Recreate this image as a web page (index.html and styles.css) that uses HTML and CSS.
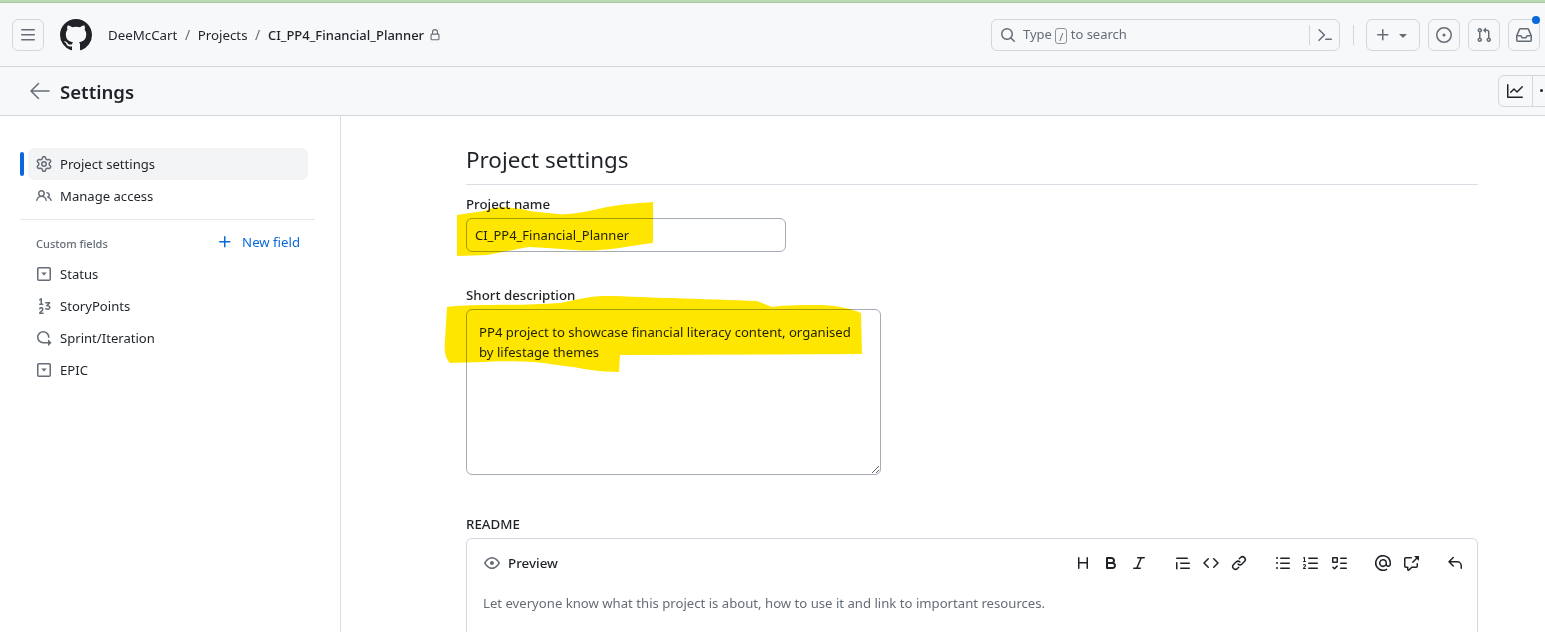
FILE: index.html
```html
<!DOCTYPE html>
<html lang="en">
<head>
<meta charset="utf-8">
<title>Settings</title>
<link rel="stylesheet" href="styles.css">
</head>
<body>
<svg class="defs" width="0" height="0">
<defs>
<symbol id="i-bars" viewBox="0 0 16 16"><path d="M1 2.75A.75.75 0 0 1 1.75 2h12.5a.75.75 0 0 1 0 1.5H1.75A.75.75 0 0 1 1 2.75Zm0 5A.75.75 0 0 1 1.75 7h12.5a.75.75 0 0 1 0 1.5H1.75A.75.75 0 0 1 1 7.75ZM1.75 12h12.5a.75.75 0 0 1 0 1.5H1.75a.75.75 0 0 1 0-1.5Z"/></symbol>
<symbol id="i-github" viewBox="0 0 16 16"><path d="M8 0c4.42 0 8 3.58 8 8a8.013 8.013 0 0 1-5.45 7.59c-.4.08-.55-.17-.55-.38 0-.27.01-1.13.01-2.2 0-.75-.25-1.23-.54-1.48 1.78-.2 3.65-.88 3.65-3.95 0-.88-.31-1.59-.82-2.15.08-.2.36-1.02-.08-2.12 0 0-.67-.22-2.2.82-.64-.18-1.32-.27-2-.27-.68 0-1.36.09-2 .27-1.53-1.03-2.2-.82-2.2-.82-.44 1.1-.16 1.92-.08 2.12-.51.56-.82 1.28-.82 2.15 0 3.06 1.86 3.75 3.64 3.95-.23.2-.44.55-.51 1.07-.46.21-1.61.55-2.33-.66-.15-.24-.6-.83-1.23-.82-.67.01-.27.38.01.53.34.19.73.9.82 1.13.16.45.68 1.31 2.69.94 0 .67.01 1.3.01 1.49 0 .21-.15.45-.55.38A7.995 7.995 0 0 1 0 8c0-4.42 3.58-8 8-8Z"/></symbol>
<symbol id="i-lock" viewBox="0 0 16 16"><path d="M4 4a4 4 0 0 1 8 0v2h.25c.966 0 1.75.784 1.75 1.75v5.5A1.75 1.75 0 0 1 12.25 15h-8.5A1.75 1.75 0 0 1 2 13.25v-5.5C2 6.784 2.784 6 3.75 6H4Zm8.25 3.5h-8.5a.25.25 0 0 0-.25.25v5.5c0 .138.112.25.25.25h8.5a.25.25 0 0 0 .25-.25v-5.5a.25.25 0 0 0-.25-.25ZM10.5 6V4a2.5 2.5 0 1 0-5 0v2Z"/></symbol>
<symbol id="i-search" viewBox="0 0 16 16"><path d="M10.68 11.74a6 6 0 0 1-7.922-8.982 6 6 0 0 1 8.982 7.922l3.04 3.04a.749.749 0 0 1-.326 1.275.749.749 0 0 1-.734-.215ZM11.5 7a4.499 4.499 0 1 0-8.997 0A4.499 4.499 0 0 0 11.5 7Z"/></symbol>
<symbol id="i-cmd" viewBox="0 0 16 16"><path d="M6.354 8.04l-4.773 4.773a.75.75 0 1 0 1.061 1.06L7.945 8.57a.75.75 0 0 0 0-1.06L2.642 2.206a.75.75 0 0 0-1.06 1.061L6.353 8.04ZM8.75 11.5a.75.75 0 0 0 0 1.5h5.5a.75.75 0 0 0 0-1.5h-5.5Z"/></symbol>
<symbol id="i-plus" viewBox="0 0 16 16"><path d="M7.75 2a.75.75 0 0 1 .75.75V7h4.25a.75.75 0 0 1 0 1.5H8.5v4.25a.75.75 0 0 1-1.5 0V8.5H2.75a.75.75 0 0 1 0-1.5H7V2.75A.75.75 0 0 1 7.75 2Z"/></symbol>
<symbol id="i-caret" viewBox="0 0 16 16"><path d="m4.427 7.427 3.396 3.396a.25.25 0 0 0 .354 0l3.396-3.396A.25.25 0 0 0 11.396 7H4.604a.25.25 0 0 0-.177.427Z"/></symbol>
<symbol id="i-issue" viewBox="0 0 16 16"><path d="M8 9.5a1.5 1.5 0 1 0 0-3 1.5 1.5 0 0 0 0 3Z"/><path d="M8 0a8 8 0 1 1 0 16A8 8 0 0 1 8 0ZM1.5 8a6.5 6.5 0 1 0 13 0 6.5 6.5 0 0 0-13 0Z"/></symbol>
<symbol id="i-pr" viewBox="0 0 16 16"><path d="M1.5 3.25a2.25 2.25 0 1 1 3 2.122v5.256a2.251 2.251 0 1 1-1.5 0V5.372A2.25 2.25 0 0 1 1.5 3.25Zm5.677-.177L9.573.677A.25.25 0 0 1 10 .854V2.5h1A2.5 2.5 0 0 1 13.5 5v5.628a2.251 2.251 0 1 1-1.5 0V5a1 1 0 0 0-1-1h-1v1.646a.25.25 0 0 1-.427.177L7.177 3.427a.25.25 0 0 1 0-.354ZM3.75 2.5a.75.75 0 1 0 0 1.5.75.75 0 0 0 0-1.5Zm0 9.5a.75.75 0 1 0 0 1.5.75.75 0 0 0 0-1.5Zm8.25.75a.75.75 0 1 0 1.5 0 .75.75 0 0 0-1.5 0Z"/></symbol>
<symbol id="i-inbox" viewBox="0 0 16 16"><path d="M2.8 2.06A1.75 1.75 0 0 1 4.41 1h7.18c.7 0 1.333.417 1.61 1.06l2.74 6.395c.04.093.06.194.06.295v4.5A1.75 1.75 0 0 1 14.25 15H1.75A1.75 1.75 0 0 1 0 13.25v-4.5c0-.101.02-.202.06-.295Zm1.61.44a.25.25 0 0 0-.23.152L1.887 8H4.75a.75.75 0 0 1 .6.3L6.625 10h2.75l1.275-1.7a.75.75 0 0 1 .6-.3h2.863L11.82 2.652a.25.25 0 0 0-.23-.152Zm10.09 7h-2.875l-1.275 1.7a.75.75 0 0 1-.6.3h-3.5a.75.75 0 0 1-.6-.3L4.375 9.5H1.5v3.75c0 .138.112.25.25.25h12.5a.25.25 0 0 0 .25-.25Z"/></symbol>
<symbol id="i-back" viewBox="0 0 24 24"><path d="M11.03 3.97a.75.75 0 0 1 0 1.06l-6.22 6.22H21a.75.75 0 0 1 0 1.5H4.81l6.22 6.22a.75.75 0 1 1-1.06 1.06l-7.5-7.5a.75.75 0 0 1 0-1.06l7.5-7.5a.75.75 0 0 1 1.06 0Z"/></symbol>
<symbol id="i-graph" viewBox="0 0 16 16"><path d="M1.5 1.75V13.5h13.75a.75.75 0 0 1 0 1.5H.75a.75.75 0 0 1-.75-.75V1.75a.75.75 0 0 1 1.5 0Zm14.28 2.53-5.25 5.25a.75.75 0 0 1-1.06 0L7 7.06 4.28 9.78a.751.751 0 0 1-1.042-.018.751.751 0 0 1-.018-1.042l3.25-3.25a.75.75 0 0 1 1.06 0L10 7.94l4.72-4.72a.751.751 0 0 1 1.042.018.751.751 0 0 1 .018 1.042Z"/></symbol>
<symbol id="i-kebab" viewBox="0 0 16 16"><path d="M8 9a1.5 1.5 0 1 0 0-3 1.5 1.5 0 0 0 0 3ZM1.5 9a1.5 1.5 0 1 0 0-3 1.5 1.5 0 0 0 0 3Zm13 0a1.5 1.5 0 1 0 0-3 1.5 1.5 0 0 0 0 3Z"/></symbol>
<symbol id="i-gear" viewBox="0 0 16 16"><path d="M8 0a8.2 8.2 0 0 1 .701.031C9.444.095 9.99.645 10.16 1.29l.288 1.107c.018.066.079.158.212.224.231.114.454.243.668.386.123.082.233.09.299.071l1.103-.303c.644-.176 1.392.021 1.82.63.27.385.506.792.704 1.218.315.675.111 1.422-.364 1.891l-.814.806c-.049.048-.098.147-.088.294.016.257.016.515 0 .772-.01.147.038.246.088.294l.814.806c.475.469.679 1.216.364 1.891a7.977 7.977 0 0 1-.704 1.217c-.428.61-1.176.807-1.82.63l-1.102-.302c-.067-.019-.177-.011-.3.071a5.909 5.909 0 0 1-.668.386c-.133.066-.194.158-.211.224l-.29 1.106c-.168.646-.715 1.196-1.458 1.26a8.006 8.006 0 0 1-1.402 0c-.743-.064-1.289-.614-1.458-1.26l-.289-1.106c-.018-.066-.079-.158-.212-.224a5.738 5.738 0 0 1-.668-.386c-.123-.082-.233-.09-.299-.071l-1.103.303c-.644.176-1.392-.021-1.82-.63a8.12 8.12 0 0 1-.704-1.218c-.315-.675-.111-1.422.363-1.891l.815-.806c.05-.048.098-.147.088-.294a6.214 6.214 0 0 1 0-.772c.01-.147-.038-.246-.088-.294l-.815-.806C.635 6.045.431 5.298.746 4.623a7.92 7.92 0 0 1 .704-1.217c.428-.61 1.176-.807 1.82-.63l1.102.302c.067.019.177.011.3-.071.214-.143.437-.272.668-.386.133-.066.194-.158.211-.224l.29-1.106C6.009.645 6.556.095 7.299.03 7.53.01 7.764 0 8 0Zm-.571 1.525c-.036.003-.108.036-.137.146l-.289 1.105c-.147.561-.549.967-.998 1.189-.173.086-.34.183-.5.29-.417.278-.97.423-1.529.27l-1.103-.303c-.109-.03-.175.016-.195.045-.22.312-.412.644-.573.99-.014.031-.021.11.059.19l.815.806c.411.406.562.957.53 1.456a4.709 4.709 0 0 0 0 .582c.032.499-.119 1.05-.53 1.456l-.815.806c-.081.08-.073.159-.059.19.162.346.353.677.573.989.02.03.085.076.195.046l1.102-.303c.56-.153 1.113-.008 1.53.27.161.107.328.204.501.29.447.222.85.629.997 1.189l.289 1.105c.029.109.101.143.137.146a6.6 6.6 0 0 0 1.142 0c.036-.003.108-.036.137-.146l.289-1.105c.147-.561.549-.967.998-1.189.173-.086.34-.183.5-.29.417-.278.97-.423 1.529-.27l1.103.303c.109.029.175-.016.195-.045.22-.313.411-.644.573-.99.014-.031.021-.11-.059-.19l-.815-.806c-.411-.406-.562-.957-.53-1.456a4.709 4.709 0 0 0 0-.582c-.032-.499.119-1.05.53-1.456l.815-.806c.081-.08.073-.159.059-.19a6.464 6.464 0 0 0-.573-.989c-.02-.03-.085-.076-.195-.046l-1.102.303c-.56.153-1.113.008-1.53-.27a4.44 4.44 0 0 0-.501-.29c-.447-.222-.85-.629-.997-1.189l-.289-1.105c-.029-.11-.101-.143-.137-.146a6.6 6.6 0 0 0-1.142 0ZM11 8a3 3 0 1 1-6 0 3 3 0 0 1 6 0ZM9.5 8a1.5 1.5 0 1 0-3.001.001A1.5 1.5 0 0 0 9.5 8Z"/></symbol>
<symbol id="i-people" viewBox="0 0 16 16"><path d="M2 5.5a3.5 3.5 0 1 1 5.898 2.549 5.508 5.508 0 0 1 3.034 4.084.75.75 0 1 1-1.482.235 4 4 0 0 0-7.9 0 .75.75 0 0 1-1.482-.236A5.507 5.507 0 0 1 3.102 8.05 3.493 3.493 0 0 1 2 5.5ZM11 4a3.001 3.001 0 0 1 2.22 5.018 5.01 5.01 0 0 1 2.56 3.012.749.749 0 0 1-.885.954.752.752 0 0 1-.549-.514 3.507 3.507 0 0 0-2.522-2.372.75.75 0 0 1-.574-.73v-.352a.75.75 0 0 1 .416-.672A1.5 1.5 0 0 0 11 5.5.75.75 0 0 1 11 4Zm-5.5-.5a2 2 0 1 0-.001 3.999A2 2 0 0 0 5.5 3.5Z"/></symbol>
<symbol id="i-select" viewBox="0 0 16 16"><path d="M1 2.75C1 1.784 1.784 1 2.75 1h10.5c.966 0 1.75.784 1.75 1.75v10.5A1.75 1.75 0 0 1 13.25 15H2.75A1.75 1.75 0 0 1 1 13.25Zm1.75-.25a.25.25 0 0 0-.25.25v10.5c0 .138.112.25.25.25h10.5a.25.25 0 0 0 .25-.25V2.75a.25.25 0 0 0-.25-.25Z"/><path d="M5.2 6.5h5.6L8 9.5Z"/></symbol>
<symbol id="i-number" viewBox="0 0 16 16"><path d="M9 4.75A.75.75 0 0 1 9.75 4h4a.75.75 0 0 1 .53 1.28l-1.89 1.892c.312.076.604.18.867.319.742.391 1.244 1.063 1.244 2.005 0 .653-.231 1.208-.629 1.627-.386.408-.894.653-1.408.777-1.01.243-2.225.063-3.124-.527a.751.751 0 0 1 .822-1.254c.534.35 1.32.474 1.951.322.306-.073.53-.201.67-.349.129-.136.218-.32.218-.596 0-.308-.123-.509-.444-.678-.373-.197-.98-.318-1.806-.318a.75.75 0 0 1-.53-1.28l1.72-1.72H9.75A.75.75 0 0 1 9 4.75Zm-3.587 5.763c-.35-.05-.77.113-.983.572a.75.75 0 1 1-1.36-.632c.508-1.094 1.589-1.565 2.558-1.425 1 .145 1.872.945 1.872 2.222 0 1.433-1.088 2.192-1.79 2.681-.308.216-.571.397-.772.573H7a.75.75 0 0 1 0 1.5H3.75a.75.75 0 0 1-.75-.75c0-.69.3-1.211.67-1.61.348-.372.8-.676 1.15-.92.8-.56 1.18-.904 1.18-1.474 0-.473-.267-.69-.587-.737ZM5.604.089A.75.75 0 0 1 6 .75v4.77h.711a.75.75 0 0 1 0 1.5H3.759a.75.75 0 0 1 0-1.5H4.5V2.15l-.334.223a.75.75 0 0 1-.832-1.248l1.5-1a.75.75 0 0 1 .77-.037Z"/></symbol>
<symbol id="i-iter" viewBox="0 0 16 16"><path d="M2.5 7.25a4.75 4.75 0 0 1 9.5 0 .75.75 0 0 0 1.5 0 6.25 6.25 0 1 0-6.25 6.25H12v2.146c0 .223.27.335.427.177l2.896-2.896a.25.25 0 0 0 0-.354l-2.896-2.896a.25.25 0 0 0-.427.177V12H7.25A4.75 4.75 0 0 1 2.5 7.25Z"/></symbol>
<symbol id="i-eye" viewBox="0 0 16 16"><path d="M8 2c1.981 0 3.671.992 4.933 2.078 1.27 1.091 2.187 2.345 2.637 3.023a1.62 1.62 0 0 1 0 1.798c-.45.678-1.367 1.932-2.637 3.023C11.67 13.008 9.981 14 8 14c-1.981 0-3.671-.992-4.933-2.078C1.797 10.83.88 9.576.43 8.898a1.62 1.62 0 0 1 0-1.798c.45-.677 1.367-1.931 2.637-3.022C4.33 2.992 6.019 2 8 2ZM1.679 7.932a.12.12 0 0 0 0 .136c.411.622 1.241 1.75 2.366 2.717C5.176 11.758 6.527 12.5 8 12.5c1.473 0 2.825-.742 3.955-1.715 1.124-.967 1.954-2.096 2.366-2.717a.12.12 0 0 0 0-.136c-.412-.621-1.242-1.75-2.366-2.717C10.824 4.242 9.473 3.5 8 3.5c-1.473 0-2.825.742-3.955 1.715-1.124.967-1.954 2.096-2.366 2.717ZM8 10a2 2 0 1 1-.001-3.999A2 2 0 0 1 8 10Z"/></symbol>
<symbol id="i-heading" viewBox="0 0 16 16"><path d="M3.75 2a.75.75 0 0 1 .75.75V7h7V2.75a.75.75 0 0 1 1.5 0v10.5a.75.75 0 0 1-1.5 0V8.5h-7v4.75a.75.75 0 0 1-1.5 0V2.75A.75.75 0 0 1 3.75 2Z"/></symbol>
<symbol id="i-bold" viewBox="0 0 16 16"><path d="M4 2h4.5a3.501 3.501 0 0 1 2.852 5.53A3.499 3.499 0 0 1 9.5 14H4a1 1 0 0 1-1-1V3a1 1 0 0 1 1-1Zm1 7v3h4.5a1.5 1.5 0 0 0 0-3Zm3.5-2a1.5 1.5 0 0 0 0-3H5v3Z"/></symbol>
<symbol id="i-italic" viewBox="0 0 16 16"><path d="M6 2.75A.75.75 0 0 1 6.75 2h6.5a.75.75 0 0 1 0 1.5h-2.505l-3.858 9H9.25a.75.75 0 0 1 0 1.5h-6.5a.75.75 0 0 1 0-1.5h2.505l3.858-9H6.75A.75.75 0 0 1 6 2.75Z"/></symbol>
<symbol id="i-quote" viewBox="0 0 16 16"><path d="M1.75 2.5h10.5a.75.75 0 0 1 0 1.5H1.75a.75.75 0 0 1 0-1.5Zm4 5h8.5a.75.75 0 0 1 0 1.5h-8.5a.75.75 0 0 1 0-1.5Zm0 5h8.5a.75.75 0 0 1 0 1.5h-8.5a.75.75 0 0 1 0-1.5ZM2.5 7.75v6a.75.75 0 0 1-1.5 0v-6a.75.75 0 0 1 1.5 0Z"/></symbol>
<symbol id="i-code" viewBox="0 0 16 16"><path d="m11.28 3.22 4.25 4.25a.75.75 0 0 1 0 1.06l-4.25 4.25a.749.749 0 0 1-1.275-.326.749.749 0 0 1 .215-.734L13.94 8l-3.72-3.72a.749.749 0 0 1 .326-1.275.749.749 0 0 1 .734.215Zm-6.56 0a.751.751 0 0 1 1.042.018.751.751 0 0 1 .018 1.042L2.06 8l3.72 3.72a.749.749 0 0 1-.326 1.275.749.749 0 0 1-.734-.215L.47 8.53a.75.75 0 0 1 0-1.06Z"/></symbol>
<symbol id="i-link" viewBox="0 0 16 16"><path d="m7.775 3.275 1.25-1.25a3.5 3.5 0 1 1 4.95 4.95l-2.5 2.5a3.5 3.5 0 0 1-4.95 0 .751.751 0 0 1 .018-1.042.751.751 0 0 1 1.042-.018 1.998 1.998 0 0 0 2.83 0l2.5-2.5a2.002 2.002 0 0 0-2.83-2.83l-1.25 1.25a.751.751 0 0 1-1.042-.018.751.751 0 0 1-.018-1.042Zm-4.69 9.64a1.998 1.998 0 0 0 2.83 0l1.25-1.25a.751.751 0 0 1 1.042.018.751.751 0 0 1 .018 1.042l-1.25 1.25a3.5 3.5 0 1 1-4.95-4.95l2.5-2.5a3.5 3.5 0 0 1 4.95 0 .751.751 0 0 1-.018 1.042.751.751 0 0 1-1.042.018 1.998 1.998 0 0 0-2.83 0l-2.5 2.5a1.998 1.998 0 0 0 0 2.83Z"/></symbol>
<symbol id="i-ul" viewBox="0 0 16 16"><path d="M5.75 2.5h8.5a.75.75 0 0 1 0 1.5h-8.5a.75.75 0 0 1 0-1.5Zm0 5h8.5a.75.75 0 0 1 0 1.5h-8.5a.75.75 0 0 1 0-1.5Zm0 5h8.5a.75.75 0 0 1 0 1.5h-8.5a.75.75 0 0 1 0-1.5ZM2 14a1 1 0 1 1 0-2 1 1 0 0 1 0 2Zm1-6a1 1 0 1 1-2 0 1 1 0 0 1 2 0ZM2 4a1 1 0 1 1 0-2 1 1 0 0 1 0 2Z"/></symbol>
<symbol id="i-ol" viewBox="0 0 16 16"><path d="M5 3.25a.75.75 0 0 1 .75-.75h8.5a.75.75 0 0 1 0 1.5h-8.5A.75.75 0 0 1 5 3.25Zm0 5a.75.75 0 0 1 .75-.75h8.5a.75.75 0 0 1 0 1.5h-8.5A.75.75 0 0 1 5 8.25Zm0 5a.75.75 0 0 1 .75-.75h8.5a.75.75 0 0 1 0 1.5h-8.5a.75.75 0 0 1-.75-.75ZM.924 10.32a.5.5 0 0 1-.851-.525l.001-.001.001-.002.002-.004.007-.011c.097-.144.215-.273.348-.384.228-.19.588-.392 1.068-.392.468 0 .858.181 1.126.484.259.294.377.673.377 1.038 0 .987-.686 1.495-1.156 1.845l-.047.035c-.303.225-.522.4-.654.597h1.357a.5.5 0 0 1 0 1H.5a.5.5 0 0 1-.5-.5c0-1.005.692-1.52 1.167-1.875l.035-.025c.531-.396.8-.625.8-1.078a.576.576 0 0 0-.128-.376C1.806 10.068 1.695 10 1.5 10a.658.658 0 0 0-.429.163.835.835 0 0 0-.144.153ZM2.003 2.5V6h.503a.5.5 0 0 1 0 1H.5a.5.5 0 0 1 0-1h.503V3.308l-.28.14a.5.5 0 0 1-.446-.895l1.003-.5a.5.5 0 0 1 .723.447Z"/></symbol>
<symbol id="i-task" viewBox="0 0 16 16"><path d="M2 2h4a1 1 0 0 1 1 1v4a1 1 0 0 1-1 1H2a1 1 0 0 1-1-1V3a1 1 0 0 1 1-1Zm4.655 8.595a.75.75 0 0 1 0 1.06L4.03 14.28a.75.75 0 0 1-1.06 0l-1.5-1.5a.749.749 0 0 1 .326-1.275.749.749 0 0 1 .734.215l.97.97 2.095-2.095a.75.75 0 0 1 1.06 0ZM9.75 2.5h5.5a.75.75 0 0 1 0 1.5h-5.5a.75.75 0 0 1 0-1.5Zm0 5h5.5a.75.75 0 0 1 0 1.5h-5.5a.75.75 0 0 1 0-1.5Zm0 5h5.5a.75.75 0 0 1 0 1.5h-5.5a.75.75 0 0 1 0-1.5Zm-7.25-9v3h3v-3Z"/></symbol>
<symbol id="i-mention" viewBox="0 0 16 16"><path d="M4.75 2.37a6.501 6.501 0 0 0 6.5 11.26.75.75 0 0 1 .75 1.298A7.999 7.999 0 0 1 .989 4.148 8 8 0 0 1 16 7.75v1.5a2.75 2.75 0 0 1-5.072 1.475 3.999 3.999 0 0 1-6.65-4.19A4 4 0 0 1 12 8v1.25a1.25 1.25 0 0 0 2.5 0V7.867a6.5 6.5 0 0 0-9.75-5.496ZM10.5 8a2.5 2.5 0 1 0-5 0 2.5 2.5 0 0 0 5 0Z"/></symbol>
<symbol id="i-xref" viewBox="0 0 16 16"><path d="M2.75 3.5a.25.25 0 0 0-.25.25v7.5c0 .138.112.25.25.25h2a.75.75 0 0 1 .75.75v2.19l2.72-2.72a.749.749 0 0 1 .53-.22h4.5a.25.25 0 0 0 .25-.25v-2.5a.75.75 0 0 1 1.5 0v2.5A1.75 1.75 0 0 1 13.25 13H9.06l-2.573 2.573A1.458 1.458 0 0 1 4 14.543V13H2.75A1.75 1.75 0 0 1 1 11.25v-7.5C1 2.784 1.784 2 2.75 2h5.5a.75.75 0 0 1 0 1.5ZM16 1.25v4.146a.25.25 0 0 1-.427.177L14.03 4.03l-3.75 3.75a.749.749 0 0 1-1.275-.326.749.749 0 0 1 .215-.734l3.75-3.75-1.543-1.543A.25.25 0 0 1 11.604 1h4.146a.25.25 0 0 1 .25.25Z"/></symbol>
<symbol id="i-reply" viewBox="0 0 16 16"><path d="M6.78 1.97a.75.75 0 0 1 0 1.06L3.81 6h6.44A4.75 4.75 0 0 1 15 10.75v2.5a.75.75 0 0 1-1.5 0v-2.5a3.25 3.25 0 0 0-3.25-3.25H3.81l2.97 2.97a.749.749 0 0 1-.326 1.275.749.749 0 0 1-.734-.215L1.47 7.28a.75.75 0 0 1 0-1.06l4.25-4.25a.75.75 0 0 1 1.06 0Z"/></symbol>
</defs>
</svg>

<div class="page">
  <div class="topline"></div>
  <header class="appbar">
    <button class="btn square"><svg class="ic muted"><use href="#i-bars"/></svg></button>
    <svg class="logo"><use href="#i-github"/></svg>
    <nav class="crumbs">
      <a class="crumb">DeeMcCart</a><span class="sep">/</span>
      <a class="crumb">Projects</a><span class="sep">/</span>
      <a class="crumb strong">CI_PP4_Financial_Planner</a>
      <svg class="ic-sm muted"><use href="#i-lock"/></svg>
    </nav>
    <div class="spacer"></div>
    <div class="search">
      <svg class="ic muted"><use href="#i-search"/></svg>
      <span class="search-text">Type <kbd class="slash">/</kbd> to search</span>
      <span class="grow"></span>
      <span class="search-div"></span>
      <svg class="ic muted"><use href="#i-cmd"/></svg>
    </div>
    <span class="bar-div"></span>
    <button class="btn plus"><svg class="ic muted"><use href="#i-plus"/></svg><svg class="ic muted"><use href="#i-caret"/></svg></button>
    <button class="btn square"><svg class="ic muted"><use href="#i-issue"/></svg></button>
    <button class="btn square"><svg class="ic muted"><use href="#i-pr"/></svg></button>
    <button class="btn square inbox"><svg class="ic muted"><use href="#i-inbox"/></svg><span class="dot"></span></button>
  </header>

  <div class="subbar">
    <svg class="ic-lg muted"><use href="#i-back"/></svg>
    <h1 class="subtitle">Settings</h1>
    <div class="spacer"></div>
    <div class="btn-group">
      <span class="group-btn"><svg class="ic dark"><use href="#i-graph"/></svg></span>
      <span class="group-btn more"><svg class="ic dark"><use href="#i-kebab"/></svg></span>
    </div>
  </div>

  <div class="layout">
    <aside class="side">
      <ul class="side-list">
        <li class="side-item active"><svg class="ic muted"><use href="#i-gear"/></svg>Project settings</li>
        <li class="side-item"><svg class="ic muted"><use href="#i-people"/></svg>Manage access</li>
      </ul>
      <hr class="side-rule">
      <div class="side-head"><span class="side-caption">Custom fields</span><span class="new-field"><svg class="ic blue"><use href="#i-plus"/></svg>New field</span></div>
      <ul class="side-list">
        <li class="side-item"><svg class="ic muted"><use href="#i-select"/></svg>Status</li>
        <li class="side-item"><svg class="ic muted"><use href="#i-number"/></svg>StoryPoints</li>
        <li class="side-item"><svg class="ic muted"><use href="#i-iter"/></svg>Sprint/Iteration</li>
        <li class="side-item"><svg class="ic muted"><use href="#i-select"/></svg>EPIC</li>
      </ul>
    </aside>

    <main class="main">
      <h2 class="heading">Project settings</h2>
      <label class="label first" for="pname">Project name</label>
      <input id="pname" class="field name" type="text" value="CI_PP4_Financial_Planner">
      <label class="label second" for="pdesc">Short description</label>
      <textarea id="pdesc" class="field desc">PP4 project to showcase financial literacy content, organised by lifestage themes</textarea>
      <div class="label third">README</div>
      <section class="readme">
        <div class="readme-bar">
          <svg class="ic muted eye"><use href="#i-eye"/></svg>
          <span class="preview">Preview</span>
          <span class="grow"></span>
          <div class="tools">
            <svg class="ic dark"><use href="#i-heading"/></svg>
            <svg class="ic dark"><use href="#i-bold"/></svg>
            <svg class="ic dark"><use href="#i-italic"/></svg>
          </div>
          <div class="tools">
            <svg class="ic dark"><use href="#i-quote"/></svg>
            <svg class="ic dark"><use href="#i-code"/></svg>
            <svg class="ic dark"><use href="#i-link"/></svg>
          </div>
          <div class="tools">
            <svg class="ic dark"><use href="#i-ul"/></svg>
            <svg class="ic dark"><use href="#i-ol"/></svg>
            <svg class="ic dark"><use href="#i-task"/></svg>
          </div>
          <div class="tools">
            <svg class="ic dark"><use href="#i-mention"/></svg>
            <svg class="ic dark"><use href="#i-xref"/></svg>
          </div>
          <div class="tools last">
            <svg class="ic dark"><use href="#i-reply"/></svg>
          </div>
        </div>
        <p class="placeholder">Let everyone know what this project is about, how to use it and link to important resources.</p>
      </section>
    </main>
  </div>

  <svg class="marker" viewBox="0 0 1545 632" width="1545" height="632">
    <path d="M457 215 C470 213 476 212 484 211 C498 205 510 208 522 209 C535 213 545 212 558 214 C570 215 585 212 607 207 C625 204 640 203 653 202 L653 243 C630 246 615 249 600 250 C580 252 560 248 530 247 C520 248 505 252 487 255 L457 256 Z"/>
    <path d="M447 307 C470 304 520 306 560 303 C575 300 590 296 603 296 C630 296 650 298 673 298 C700 299 735 300 757 301 L772 307 C785 305 805 305 823 305 C840 306 852 309 861 313 L862 354 L620 355 L619 372 C600 372 585 369 573 367 C555 365 545 363 535 362 C515 361 495 361 483 362 L450 363 C445 358 444 350 445 340 Z"/>
  </svg>
</div>
</body>
</html>
```
FILE: styles.css
```css
* { box-sizing: border-box; }
html, body { margin: 0; padding: 0; background: #fff; }
body {
  font-family: "Noto Sans", "Open Sans", sans-serif;
  font-size: 13px;
  color: #1f2328;
  overflow: hidden;
}
.defs { position: absolute; }
.page { position: relative; width: 1545px; height: 632px; overflow: hidden; }
.topline { height: 3px; background: #bcd7b4; border-bottom: 1px solid #a9c9a2; }
.ic { width: 16px; height: 16px; flex: none; fill: currentColor; display: block; }
.ic-sm { width: 12px; height: 12px; flex: none; fill: currentColor; display: block; }
.ic-lg { width: 24px; height: 24px; flex: none; fill: currentColor; display: block; }
.muted { color: #656d76; }
.dark { color: #1f2328; }
.blue { color: #0969da; }
.spacer, .grow { flex: 1; }

.appbar {
  height: 64px;
  background: #f6f8fa;
  border-bottom: 1px solid #d0d7de;
  display: flex;
  align-items: center;
  padding: 0 5px 0 12px;
}
.btn {
  height: 32px;
  border: 1px solid #d0d7de;
  border-radius: 6px;
  background: transparent;
  display: flex;
  align-items: center;
  justify-content: center;
  padding: 0;
}
.square { width: 32px; margin-left: 8px; }
.appbar > .square:first-child { margin-left: 0; }
.plus { width: 54px; gap: 4px; margin-left: 0; }
.inbox { position: relative; }
.dot {
  position: absolute;
  top: -4px;
  right: -1px;
  width: 8px;
  height: 8px;
  border-radius: 50%;
  background: #0969da;
}
.logo { width: 32px; height: 32px; margin-left: 16px; fill: #1f2328; flex: none; }
.crumbs { display: flex; align-items: center; margin-left: 16px; font-size: 13.3px; color: #1f2328; }
.sep { margin: 0 7.6px; color: #656d76; font-size: 14px; }
.crumb.strong { font-weight: 500; font-size: 13px; }
.crumbs .ic-sm { margin-left: 5px; }
.search {
  width: 349px;
  height: 32px;
  border: 1px solid #d0d7de;
  border-radius: 6px;
  display: flex;
  align-items: center;
  padding: 0 6px 0 8px;
  color: #656d76;
}
.search-text { margin-left: 7px; white-space: nowrap; }
.slash {
  display: inline-block;
  width: 12px;
  height: 16px;
  line-height: 13px;
  border: 1px solid #8c959f;
  border-radius: 3px;
  font: inherit;
  font-size: 11px;
  text-align: center;
  vertical-align: middle;
}
.search-div { width: 1px; height: 20px; background: #d0d7de; margin-right: 7px; }
.bar-div { width: 1px; height: 20px; background: #d0d7de; margin: 0 12px 0 13px; }

.subbar {
  height: 49px;
  background: #f6f8fa;
  border-bottom: 1px solid #d0d7de;
  display: flex;
  align-items: center;
  padding-left: 28px;
  width: 1600px;
}
.subtitle { margin: 2px 0 0 8px; font-size: 18.6px; font-weight: 600; line-height: 24px; }
.btn-group {
  display: flex;
  height: 32px;
  margin-right: 34px;
  border: 1px solid #d0d7de;
  border-radius: 6px;
}
.group-btn { width: 33px; display: flex; align-items: center; justify-content: flex-start; padding-left: 8px; }
.group-btn.more { border-left: 1px solid #d0d7de; padding-left: 6.5px; }

.layout { display: flex; height: 517px; }
.side {
  width: 341px;
  flex: none;
  border-right: 1px solid #d8dee4;
  padding: 32px 25px 0 20px;
}
.side-list { list-style: none; margin: 0; padding: 0 0 0 8px; }
.side-item {
  height: 32px;
  width: 280px;
  display: flex;
  align-items: center;
  gap: 8px;
  padding-left: 8px;
  border-radius: 6px;
  position: relative;
  font-size: 13.1px;
}
.side-item.active { background: #f3f4f6; }
.side-item.active::before {
  content: "";
  position: absolute;
  left: -8px;
  top: 4px;
  width: 4px;
  height: 24px;
  border-radius: 3px;
  background: #0969da;
}
.side-rule { margin: 7px 0 0; border: 0; border-top: 1px solid #e6e9ec; }
.side-head { display: flex; align-items: center; height: 38px; padding: 8px 15px 0 16px; }
.side-caption { font-size: 11px; font-weight: 500; color: #656d76; flex: 1; }
.new-field { display: flex; align-items: center; gap: 9px; color: #0969da; margin-top: -3px; font-size: 13.2px; }

.main { flex: 1; padding: 30px 67px 0 125px; min-width: 0; }
.heading {
  margin: 0;
  height: 39px;
  font-size: 22.4px;
  font-weight: 400;
  line-height: 27px;
  border-bottom: 1px solid #d8dee4;
}
.label { display: block; font-size: 13.3px; font-weight: 500; line-height: 18px; }
.first { margin-top: 10px; }
.second { margin-top: 34px; }
.third { margin-top: 40px; }
.field {
  display: block;
  border: 1px solid #a4acb5;
  border-radius: 6px;
  background: #fff;
  font-family: inherit;
  font-size: 13px;
  color: #1f2328;
  outline: none;
}
.name { width: 320px; height: 34px; margin-top: 5px; padding: 0 8px; }
.desc { width: 415px; height: 166px; margin-top: 5px; padding: 12px 26px 12px 12px; font-size: 13.14px; line-height: 20px; resize: both; }
.readme {
  margin-top: 5px;
  height: 200px;
  border: 1px solid #d0d7de;
  border-radius: 6px;
  padding: 0 14px 0 16px;
}
.readme-bar { display: flex; align-items: center; height: 47px; }
.eye { margin-left: 1px; }
.preview { margin-left: 8px; font-weight: 500; font-size: 13.4px; }
.tools { display: flex; gap: 12px; margin-right: 28px; }
.tools.last { margin-right: 0; }
.placeholder { margin: 8px 0 0; color: #656d76; font-size: 13.15px; }

.marker {
  position: absolute;
  left: 0;
  top: 0;
  mix-blend-mode: multiply;
  pointer-events: none;
  fill: #ffe600;
}
```
